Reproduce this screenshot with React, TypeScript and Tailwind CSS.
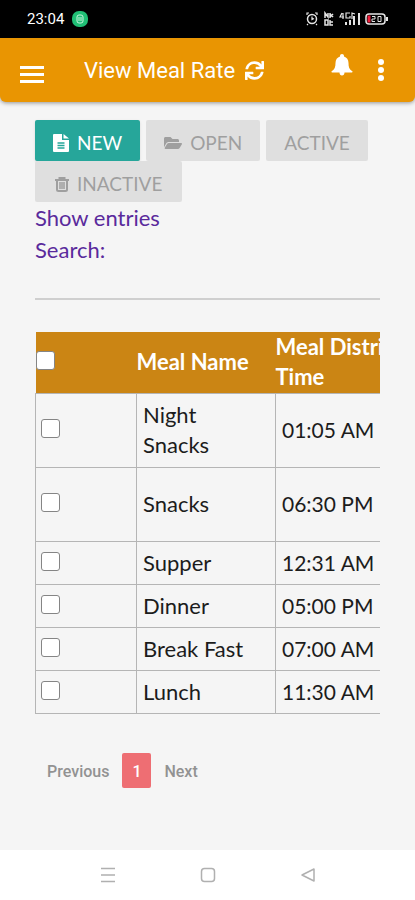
import { FaFolderOpen, FaSync } from "react-icons/fa";

type Meal = { name: string; time: string; tall?: boolean };

const meals: Meal[] = [
  { name: "Night Snacks", time: "01:05 AM", tall: true },
  { name: "Snacks", time: "06:30 PM", tall: true },
  { name: "Supper", time: "12:31 AM" },
  { name: "Dinner", time: "05:00 PM" },
  { name: "Break Fast", time: "07:00 AM" },
  { name: "Lunch", time: "11:30 AM" },
];

function StatusBar() {
  return (
    <div className="flex h-[38px] items-center bg-black pr-[26px] pl-[27px] text-white">
      <span className="font-['Roboto',sans-serif] text-[15px]">23:04</span>
      <svg className="ml-2 size-4" viewBox="0 0 16 16" aria-hidden="true">
        <rect width="16" height="16" rx="7" fill="#20bf75" />
        <rect x="5" y="4" width="6" height="8" rx="2" fill="none" stroke="#c8f5de" />
        <path d="M6 7h4M6 9h4" stroke="#c8f5de" />
      </svg>
      <svg className="ml-auto h-4 w-[86px]" viewBox="0 0 86 16" fill="none" stroke="#e5e5e5" aria-hidden="true">
        <circle cx="9" cy="8" r="4.500" strokeWidth="1.500" />
        <path d="M4 4V2h2M14 4V2h-2M5 13l-1 1M13 13l1 1M9 5.500v3l2-1" strokeWidth="1.200" />
        <path d="M22 7V2l3 4V2M27 2v5M27 3l3 3M27 6l3-3M22 9h3v5h-3zM27 9v5h3M27 11h3" strokeWidth="1.500" />
        <path d="M39 2l-2 4h4M40 2v6M47 2h-4v5h4V5M49 8V2l3 1" strokeWidth="1.200" />
        <path d="M43 14v-3M47 14V9M51 14V5M56 14V2" strokeWidth="2" />
        <rect x="63" y="3" width="19" height="10" rx="3" strokeWidth="1.500" />
        <path d="M84 6v4" strokeWidth="2" />
        <path d="M66 4.500v7" stroke="#f01c3a" strokeWidth="3" />
        <path d="M69 5.500h3V8h-3v2.500h3M75 5.500h3v5h-3z" strokeWidth="1" />
      </svg>
    </div>
  );
}

function AppBar() {
  return (
    <header className="flex h-16 items-center rounded-b-md bg-[#e99502] pr-7 pl-5 text-white shadow-[0_1px_4px_rgba(0,0,0,0.4)]">
      <button type="button" aria-label="Menu" className="mt-2 flex w-6 flex-col gap-1">
        <span className="h-[3px] bg-white" />
        <span className="h-[3px] bg-white" />
        <span className="h-[3px] bg-white" />
      </button>
      <h1 className="ml-10 font-['Roboto',sans-serif] text-[22px]">View Meal Rate</h1>
      <button type="button" aria-label="Refresh" className="ml-[10px]">
        <FaSync className="size-[19px]" />
      </button>
      <button type="button" aria-label="Notifications" className="mb-[10px] ml-auto">
        <svg className="size-[22px]" viewBox="0 0 22 22" fill="currentColor" aria-hidden="true">
          <path d="M11 0c1.200 0 2 .8 2 2v.6c2.800.8 4.500 3.200 4.500 6.400 0 4 .8 6.500 3.800 8.300.5.400.300 1.200-.4 1.200H13.500c0 1.800-1 3-2.500 3s-2.500-1.200-2.500-3H1.100c-.7 0-.9-.8-.4-1.200C3.700 15.500 4.500 13 4.500 9c0-3.200 1.700-5.600 4.500-6.400V2c0-1.200.8-2 2-2z" />
        </svg>
      </button>
      <button type="button" aria-label="More options" className="ml-[22px] flex w-3 flex-col items-center gap-[2px]">
        <span className="size-[6px] rounded-full bg-white" />
        <span className="size-[6px] rounded-full bg-white" />
        <span className="size-[6px] rounded-full bg-white" />
      </button>
    </header>
  );
}

function FileIcon() {
  return (
    <svg className="h-[18px] w-4" viewBox="0 0 16 18" aria-hidden="true">
      <path d="M1 0h8v6h7v11a1 1 0 0 1-1 1H1a1 1 0 0 1-1-1V1a1 1 0 0 1 1-1z" fill="currentColor" />
      <path d="M10.500 0v4.500H16z" fill="currentColor" />
      <path d="M4.500 9h7M4.500 11.500h7M4.500 14h7" stroke="#26a69a" strokeWidth="1.300" />
    </svg>
  );
}

function TrashIcon() {
  return (
    <svg className="h-4 w-[14px]" viewBox="0 0 14 16" fill="none" stroke="currentColor" aria-hidden="true">
      <path d="M0 4h14M4.500 4V2h5v2" strokeWidth="2" />
      <path d="M2 5v8.500c0 1 .5 1.500 1.500 1.500h7c1 0 1.500-.5 1.500-1.500V5" strokeWidth="2" />
      <path d="M5 6v7M7 6v7M9 6v7" strokeWidth="1.500" />
    </svg>
  );
}

const grayButton =
  "flex h-[41px] items-center gap-2 rounded-xs bg-[#dfdfdf] px-[18px] pt-[5px] text-[19px] text-[#9f9f9f]";
const checkbox = "block size-[19px] appearance-none rounded-[3px] border border-[#858585] bg-white checked:bg-[#26a69a]";

export default function App() {
  return (
    <div className="flex min-h-screen flex-col bg-[#f5f5f5] font-['Lato',sans-serif]">
      <StatusBar />
      <AppBar />
      <main className="flex-1 px-[35px] pt-[18px]">
        <div className="flex flex-wrap gap-x-[6px]">
          <button
            type="button"
            className="flex h-[41px] items-center gap-2 rounded-xs bg-[#26a69a] px-[18px] pt-[5px] text-[19px] text-white shadow-sm"
          >
            <FileIcon />
            NEW
          </button>
          <button type="button" className={grayButton}>
            <FaFolderOpen className="size-[18px]" />
            OPEN
          </button>
          <button type="button" className={grayButton}>
            ACTIVE
          </button>
          <button
            type="button"
            className="flex h-[41px] items-center gap-2 rounded-xs bg-[#dfdfdf] px-5 pt-[5px] text-[19px] text-[#9f9f9f]"
          >
            <TrashIcon />
            INACTIVE
          </button>
        </div>

        <div className="text-[22px] leading-8 text-[#5a2a9c]">
          <p>Show entries</p>
          <label htmlFor="search" className="block">
            Search:
          </label>
          <input
            id="search"
            type="search"
            className="block h-[34px] w-full border-b-2 border-[#cfcfcf] bg-transparent outline-none"
          />
        </div>

        <div className="mt-8 overflow-hidden">
          <table className="w-[520px] table-fixed border-collapse text-[22px] leading-[30px] text-[#1c1c1c]">
            <colgroup>
              <col className="w-[101px]" />
              <col className="w-[139px]" />
              <col />
            </colgroup>
            <thead>
              <tr className="h-[61px] bg-[#cb8514] text-left text-white">
                <th className="pb-[3px]">
                  <input type="checkbox" aria-label="Select all" className={checkbox} />
                </th>
                <th>Meal Name</th>
                <th>
                  Meal Distribution
                  <br />
                  Time
                </th>
              </tr>
            </thead>
            <tbody>
              {meals.map((meal) => (
                <tr key={meal.name} className={meal.tall ? "h-[74px]" : "h-[43px]"}>
                  <td className="border border-[#b5b5b5] px-[5px] pb-[3px]">
                    <input type="checkbox" aria-label={meal.name} className={checkbox} />
                  </td>
                  <td className="border border-[#b5b5b5] pr-10 pl-[6px]">
                    <span className={meal.tall ? "" : "whitespace-nowrap"}>{meal.name}</span>
                  </td>
                  <td className="border border-[#b5b5b5] px-[6px] text-[21px]">{meal.time}</td>
                </tr>
              ))}
            </tbody>
          </table>
        </div>

        <nav
          aria-label="Pagination"
          className="mt-[39px] flex h-[35px] items-center gap-[13px] pl-3 font-['Roboto',sans-serif] text-base font-medium text-[#929292]"
        >
          <button type="button" className="pt-1">
            Previous
          </button>
          <button type="button" aria-current="page" className="h-[35px] w-[29px] rounded-xs bg-[#ee6e73] pt-1 text-white">
            1
          </button>
          <button type="button" className="pt-1">
            Next
          </button>
        </nav>
      </main>

      <nav aria-label="System" className="flex h-[50px] items-center justify-center gap-[84px] bg-white">
        <button type="button" aria-label="Recent apps">
          <svg className="size-4" viewBox="0 0 16 16" stroke="#b0b0b0" strokeWidth="1.500">
            <path d="M1 1.500h14M1 8h14M1 14.500h14" />
          </svg>
        </button>
        <button type="button" aria-label="Home">
          <svg className="size-4" viewBox="0 0 16 16" fill="none" stroke="#b0b0b0" strokeWidth="1.500">
            <rect x="1.500" y="1.500" width="13" height="13" rx="3" />
          </svg>
        </button>
        <button type="button" aria-label="Back">
          <svg className="size-4" viewBox="0 0 16 16" fill="none" stroke="#b0b0b0" strokeWidth="1.500" strokeLinejoin="round">
            <path d="M14 2v12L2 8z" />
          </svg>
        </button>
      </nav>
    </div>
  );
}
